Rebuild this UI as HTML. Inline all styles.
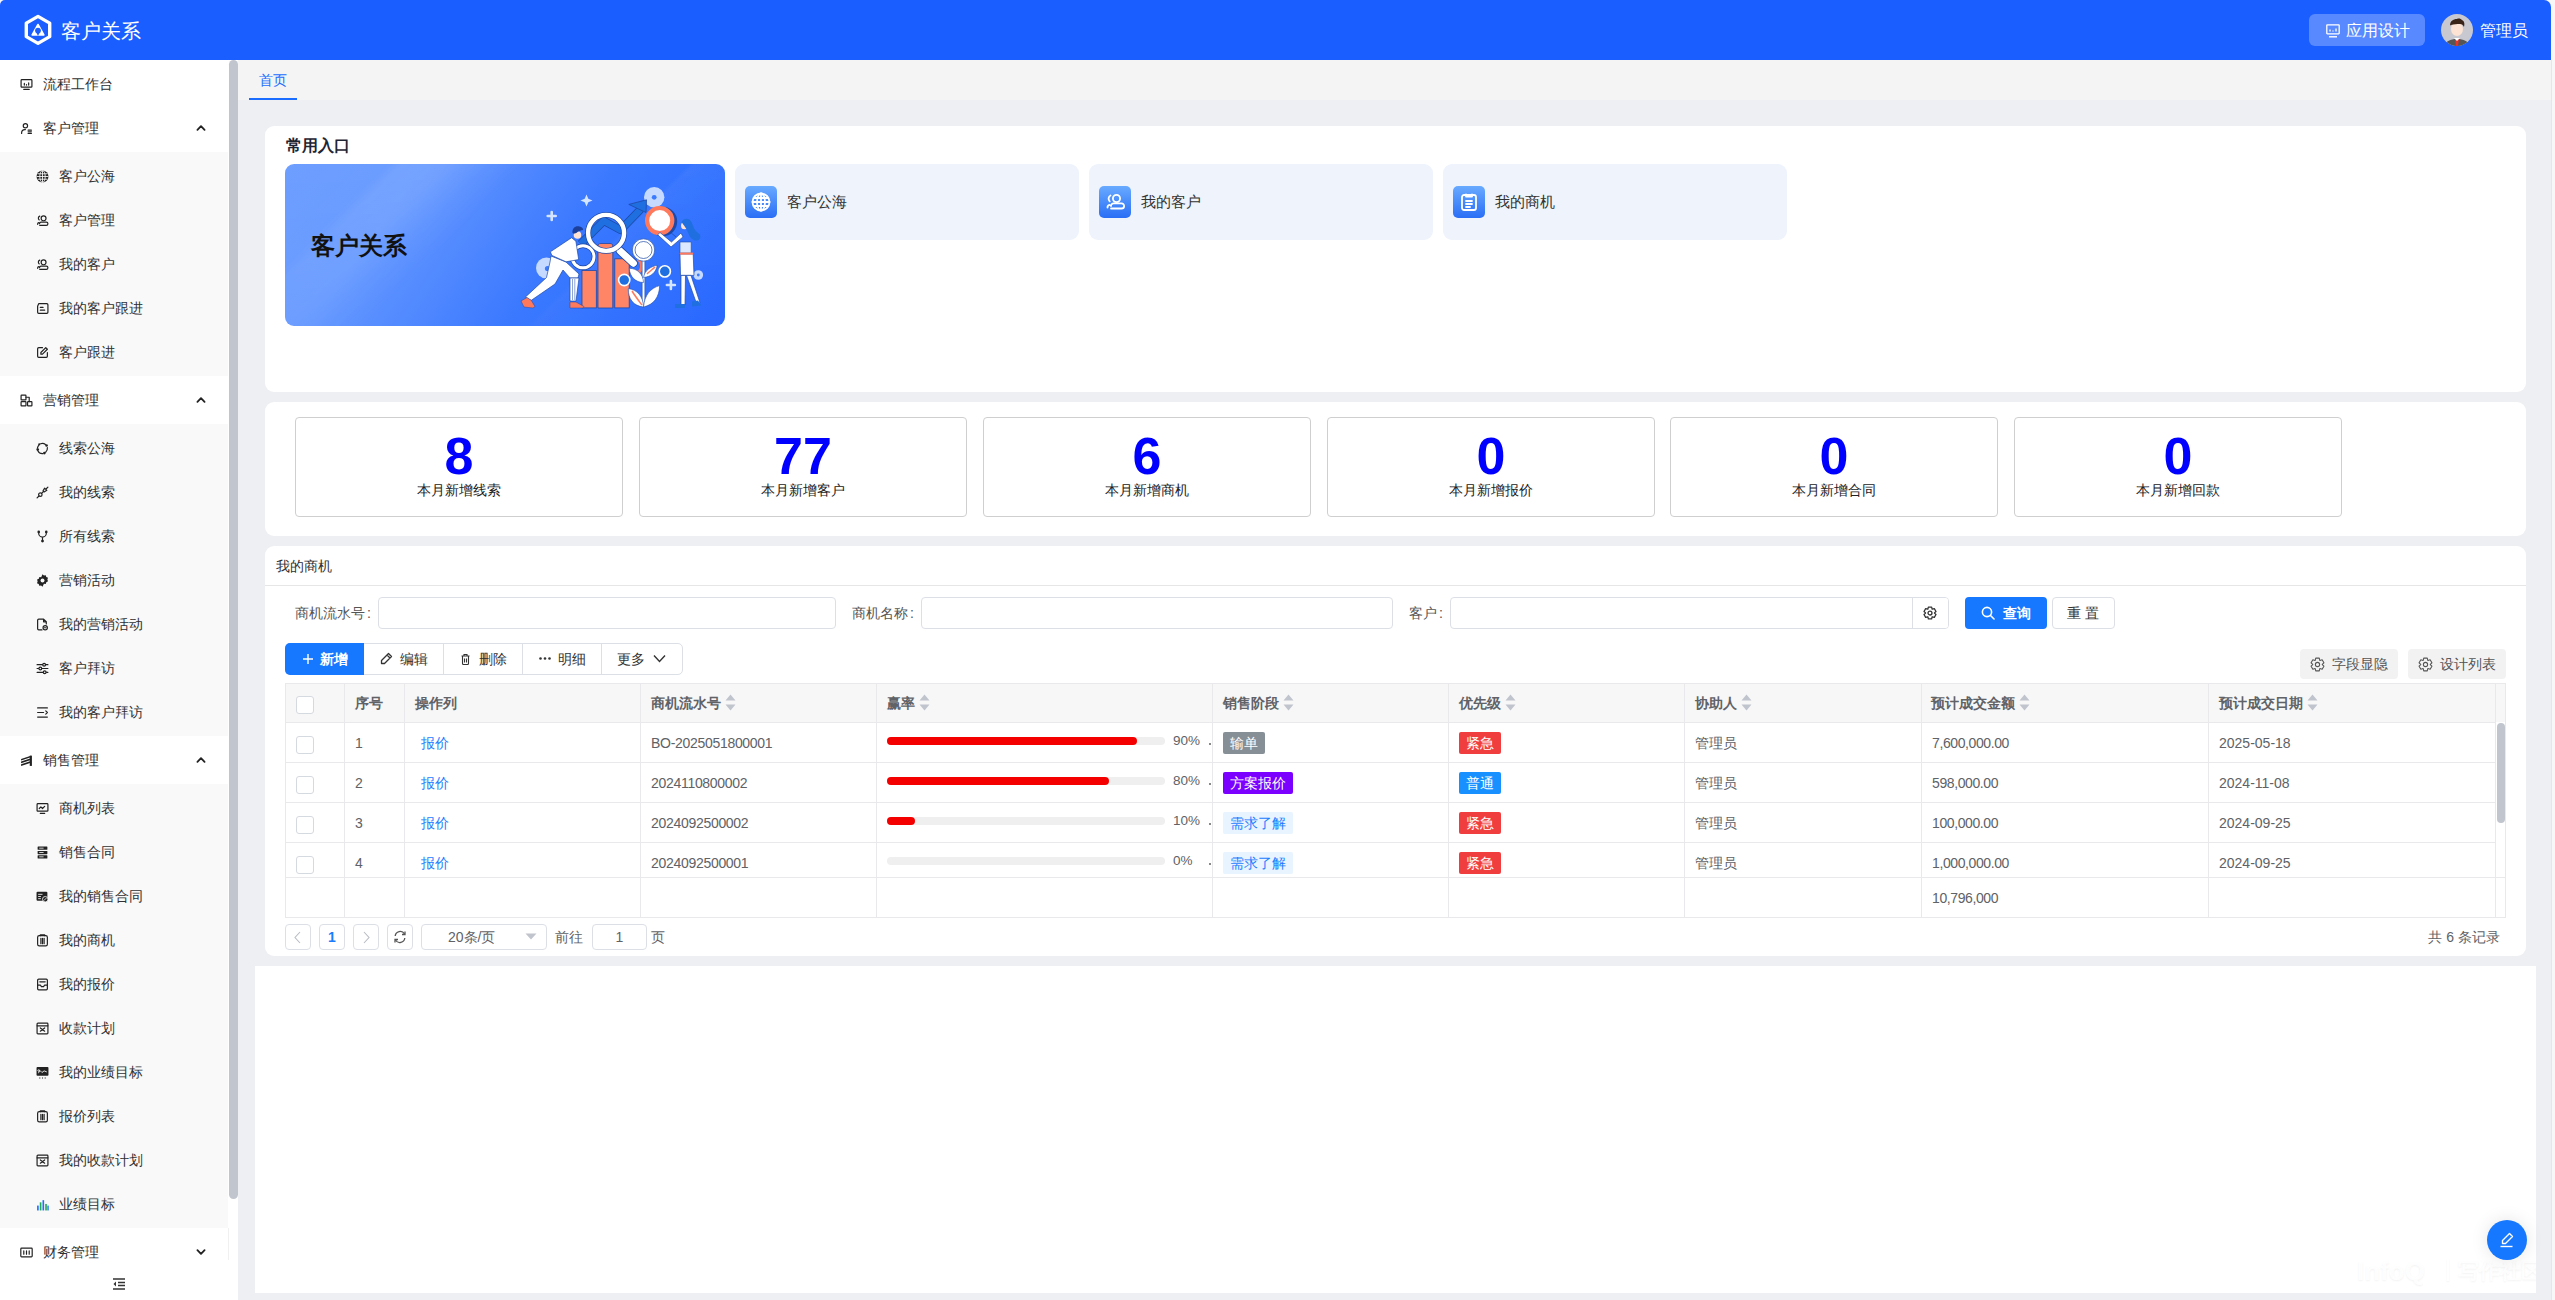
<!DOCTYPE html>
<html><head><meta charset="utf-8"><style>
*{box-sizing:border-box;margin:0;padding:0}
html,body{width:2555px;height:1300px;overflow:hidden;background:#f7f7f7;font-family:"Liberation Sans",sans-serif;font-size:14px;color:#303133}
.a{position:absolute}
svg{display:block}
#hdr{position:absolute;left:0;top:0;width:2551px;height:60px;background:#1b5eff;border-radius:5px 7px 0 0}
#side{position:absolute;left:0;top:60px;width:238px;height:1240px;background:#fff;overflow:hidden}
.mi{position:absolute;left:0;width:228px;height:44px;line-height:44px;font-size:14px;color:#303133;white-space:nowrap}
.mi svg{position:absolute;top:15.5px;left:19.5px}
.mi .t{position:absolute;left:43px;top:0}
.sm svg{left:35.5px}
.sm .t{left:59px}
.sub{position:absolute;left:0;width:228px;background:#f9f9f9}
.arr{position:absolute;left:196px;top:18px}
#thumb{position:absolute;left:229px;top:60px;width:9px;height:1139px;background:#c1c5cd;border-radius:5px}
#tabbar{position:absolute;left:238px;top:60px;width:2313px;height:40px;background:#f4f4f5}
#main{position:absolute;left:238px;top:100px;width:2313px;height:1200px;background:#eeeff3}
.card{position:absolute;background:#fff;border-radius:9px}
</style></head><body>
<div id="hdr"><svg class="a" style="left:22px;top:13px" width="32" height="34" viewBox="0 0 32 34"><path d="M16 3.4L27.7 10.15v13.5L16 30.4 4.3 23.65v-13.5z" fill="none" stroke="#fff" stroke-width="3.4" stroke-linejoin="round"/><path d="M16 11.5L21.8 22H10.2z" fill="#fff" stroke="#fff" stroke-width="1.6" stroke-linejoin="round"/><circle cx="16" cy="17.6" r="2.9" fill="#1b5eff"/><path d="M14.2 19.2L16 23l1.8-3.8z" fill="#1b5eff"/></svg><div class="a" style="left:61px;top:17px;font-size:20px;line-height:28px;color:#fff">客户关系</div><div class="a" style="left:2309px;top:14px;width:116px;height:32px;border-radius:6px;background:rgba(255,255,255,0.27)"></div><svg class="a" style="left:2326px;top:24px" width="14" height="14" viewBox="0 0 14 14"><rect x="0.8" y="0.8" width="12.4" height="9" rx="0.5" fill="none" stroke="#fff" stroke-width="1.3"/><path d="M3 12.8h8" stroke="#fff" stroke-width="1.4"/><path d="M4 7.5V5.5M7 7.5V6.5M10 7.5V4.5" stroke="#fff" stroke-width="1.3"/></svg><div class="a" style="left:2346px;top:20px;font-size:16px;line-height:22px;color:#fff">应用设计</div><svg class="a" style="left:2441px;top:14px" width="32" height="32" viewBox="0 0 32 32"><defs><clipPath id="av"><circle cx="16" cy="16" r="16"/></clipPath></defs><g clip-path="url(#av)"><rect width="32" height="32" fill="#c7c8d0"/><path d="M4 32c1-5 5-7 12-7s11 2 12 7z" fill="#555"/><path d="M14 25h4l-1 7h-2z" fill="#e8322a"/><path d="M13 24l3 3 3-3" fill="#fff"/><ellipse cx="16" cy="15" rx="6" ry="7" fill="#fde3d4"/><path d="M9 12c0-5 3-7 7-7 2-1 4 0 5 1 2 1 3 3 2 7-1-2-2-3-4-3-3 0-6 0-9 1-1 0-1 1-1 1z" fill="#3a2418"/></g></svg><div class="a" style="left:2480px;top:20px;font-size:16px;line-height:22px;color:#fff">管理员</div></div>
<div id="side"><div class="mi" style="top:2px"><svg width="13" height="13" viewBox="0 0 24 24" ><g fill="none" stroke="#222" stroke-width="2.2" stroke-linecap="round" stroke-linejoin="round"><rect x="2" y="3" width="20" height="14" rx="1.5"/><path d="M7 21h10M8 13v-3M12 13v-1M16 13v-4"/></g></svg><span class="t">流程工作台</span></div><div class="mi" style="top:46px"><svg width="13" height="13" viewBox="0 0 24 24" ><g fill="none" stroke="#222" stroke-width="2.2" stroke-linecap="round" stroke-linejoin="round"><circle cx="10" cy="7" r="4"/><path d="M3 21v-1a6 6 0 0 1 6-6h1M15 15h6M15 18h6M15 21h6"/></g></svg><span class="t">客户管理</span></div><svg class="a" style="left:196px;top:64px" width="10" height="8" viewBox="0 0 14 9"><path d="M2 7l5-5 5 5" fill="none" stroke="#222" stroke-width="2.6" stroke-linecap="round" stroke-linejoin="round"/></svg><div class="sub" style="top:92px;height:224px"></div><div class="mi sm" style="top:94px"><svg width="13" height="13" viewBox="0 0 24 24" ><circle cx="12" cy="12" r="11" fill="#222"/><g fill="none" stroke="#f9f9f9" stroke-width="1.6"><path d="M1 12h22M3 7h18M3 17h18M12 1v22"/><ellipse cx="12" cy="12" rx="5" ry="11"/></g></svg><span class="t">客户公海</span></div><div class="mi sm" style="top:138px"><svg width="13" height="13" viewBox="0 0 24 24" ><g fill="none" stroke="#222" stroke-width="2.2" stroke-linecap="round" stroke-linejoin="round"><circle cx="14" cy="8" r="4.5"/><path d="M7 21h12a3 3 0 0 0 0-6H9.5a3 3 0 0 0-3 3M7 4a4 4 0 0 0-1 7M3 19a3 3 0 0 1 2-3"/></g></svg><span class="t">客户管理</span></div><div class="mi sm" style="top:182px"><svg width="13" height="13" viewBox="0 0 24 24" ><g fill="none" stroke="#222" stroke-width="2.2" stroke-linecap="round" stroke-linejoin="round"><circle cx="14" cy="8" r="4.5"/><path d="M7 21h12a3 3 0 0 0 0-6H9.5a3 3 0 0 0-3 3M7 4a4 4 0 0 0-1 7M3 19a3 3 0 0 1 2-3"/></g></svg><span class="t">我的客户</span></div><div class="mi sm" style="top:226px"><svg width="13" height="13" viewBox="0 0 24 24" ><g fill="none" stroke="#222" stroke-width="2.2" stroke-linecap="round" stroke-linejoin="round"><path d="M5 3h15a2 2 0 0 1 2 2v14a2 2 0 0 1-2 2H5a2 2 0 0 1-2-2V8l2-5z"/><path d="M8 10h5M8 15h8"/></g></svg><span class="t">我的客户跟进</span></div><div class="mi sm" style="top:270px"><svg width="13" height="13" viewBox="0 0 24 24" ><g fill="none" stroke="#222" stroke-width="2.2" stroke-linecap="round" stroke-linejoin="round"><path d="M12 3H5a2 2 0 0 0-2 2v14a2 2 0 0 0 2 2h14a2 2 0 0 0 2-2v-7"/><path d="M18 3l3 3-9 9H9v-3z"/></g></svg><span class="t">客户跟进</span></div><div class="mi" style="top:318px"><svg width="13" height="13" viewBox="0 0 24 24" ><g fill="none" stroke="#222" stroke-width="2.2" stroke-linecap="round" stroke-linejoin="round"><rect x="2" y="2" width="9" height="9" rx="1"/><rect x="2" y="14" width="9" height="8" rx="1"/><rect x="14" y="14" width="8" height="8" rx="1"/><path d="M11 6h6v8"/></g></svg><span class="t">营销管理</span></div><svg class="a" style="left:196px;top:336px" width="10" height="8" viewBox="0 0 14 9"><path d="M2 7l5-5 5 5" fill="none" stroke="#222" stroke-width="2.6" stroke-linecap="round" stroke-linejoin="round"/></svg><div class="sub" style="top:364px;height:312px"></div><div class="mi sm" style="top:366px"><svg width="13" height="13" viewBox="0 0 24 24" ><g fill="none" stroke="#222" stroke-width="2.2" stroke-linecap="round" stroke-linejoin="round"><path d="M8.5 3.2A9.5 9.5 0 0 1 17.5 4.6M21 10.5a9.5 9.5 0 0 1-3.2 8.4M13 21.4a9.5 9.5 0 0 1-9.6-5.2M2.6 11.5a9.5 9.5 0 0 1 2-5"/></g><g fill="#222"><circle cx="19.5" cy="6.5" r="2.4"/><circle cx="15.5" cy="20.5" r="2.4"/><circle cx="3.2" cy="14" r="2.4"/><circle cx="6" cy="4.5" r="2"/></g></svg><span class="t">线索公海</span></div><div class="mi sm" style="top:410px"><svg width="13" height="13" viewBox="0 0 24 24" ><g fill="none" stroke="#222" stroke-width="2.2" stroke-linecap="round" stroke-linejoin="round"><path d="M2 22l3.5-3.5"/><circle cx="8" cy="16" r="3.2"/><path d="M10.5 13.5l3-3"/><path d="M13 9l3-5 4 4-5 3z"/><path d="M19 5l3-3"/></g></svg><span class="t">我的线索</span></div><div class="mi sm" style="top:454px"><svg width="13" height="13" viewBox="0 0 24 24" ><g fill="none" stroke="#222" stroke-width="2.2" stroke-linecap="round" stroke-linejoin="round"><path d="M5 3.5v2.5a7 7 0 0 0 7 7 7 7 0 0 0 7-7V3.5M12 13v6"/></g><g fill="#222"><circle cx="5" cy="3.5" r="2.4"/><circle cx="19" cy="3.5" r="2.4"/><circle cx="12" cy="20.5" r="2.6"/></g></svg><span class="t">所有线索</span></div><div class="mi sm" style="top:498px"><svg width="13" height="13" viewBox="0 0 24 24" ><path fill="#222" d="M12 0.5l2.6 2.3 3.4-.6 1 3.3 3.2 1.6-1.2 3.2 1.2 3.3-3.2 1.5-1 3.3-3.4-.6L12 23.5l-2.6-2.3-3.4.6-1-3.3-3.2-1.5 1.2-3.3L2 10.3l3.2-1.6 1-3.3 3.4.6z"/><circle cx="12" cy="12" r="3.6" fill="#f9f9f9"/></svg><span class="t">营销活动</span></div><div class="mi sm" style="top:542px"><svg width="13" height="13" viewBox="0 0 24 24" ><g fill="none" stroke="#222" stroke-width="2.2" stroke-linecap="round" stroke-linejoin="round"><path d="M14 2H5a2 2 0 0 0-2 2v16a2 2 0 0 0 2 2h6M14 2l5 5v4M14 2v5h5"/><circle cx="17" cy="18" r="4"/><path d="M15.5 18h3"/></g></svg><span class="t">我的营销活动</span></div><div class="mi sm" style="top:586px"><svg width="13" height="13" viewBox="0 0 24 24" ><g fill="none" stroke="#222" stroke-width="2.2" stroke-linecap="round" stroke-linejoin="round"><path d="M2 5h20M2 12h20M2 19h20"/></g><g fill="#f9f9f9" stroke="#222" stroke-width="2.2"><circle cx="15" cy="5" r="2.6"/><circle cx="8" cy="12" r="2.6"/><circle cx="16" cy="19" r="2.6"/></g></svg><span class="t">客户拜访</span></div><div class="mi sm" style="top:630px"><svg width="13" height="13" viewBox="0 0 24 24" ><g fill="none" stroke="#222" stroke-width="2.2" stroke-linecap="round" stroke-linejoin="round"><path d="M3 3.5h18M3 12h11M3 20.5h18M18 9l3 3-3 3"/></g></svg><span class="t">我的客户拜访</span></div><div class="mi" style="top:678px"><svg width="13" height="13" viewBox="0 0 24 24" ><g fill="#222"><path d="M2 9l18-6v3L2 12zM2 14l18-6v3L2 17zM2 19l18-6v3L2 22z"/><rect x="18" y="3" width="4" height="19"/></g></svg><span class="t">销售管理</span></div><svg class="a" style="left:196px;top:696px" width="10" height="8" viewBox="0 0 14 9"><path d="M2 7l5-5 5 5" fill="none" stroke="#222" stroke-width="2.6" stroke-linecap="round" stroke-linejoin="round"/></svg><div class="sub" style="top:724px;height:444px"></div><div class="mi sm" style="top:726px"><svg width="13" height="13" viewBox="0 0 24 24" ><g fill="none" stroke="#222" stroke-width="2.2" stroke-linecap="round" stroke-linejoin="round"><rect x="2" y="3" width="20" height="14" rx="1.5"/><path d="M8 21h8M6 12l3-3 3 3 4-4"/></g></svg><span class="t">商机列表</span></div><div class="mi sm" style="top:770px"><svg width="13" height="13" viewBox="0 0 24 24" ><g fill="#222"><rect x="3" y="1" width="18" height="6" rx="1"/><rect x="3" y="9" width="18" height="6" rx="1"/><rect x="3" y="17" width="18" height="6" rx="1"/></g><g stroke="#f9f9f9" stroke-width="1.5"><path d="M6 4h8M6 12h8M6 20h8"/></g></svg><span class="t">销售合同</span></div><div class="mi sm" style="top:814px"><svg width="13" height="13" viewBox="0 0 24 24" ><rect x="1" y="3" width="20" height="17" rx="2" fill="#222"/><path d="M4 8h8M4 12h5M4 16h5" stroke="#f9f9f9" stroke-width="1.6"/><circle cx="17" cy="17" r="5" fill="#222" stroke="#f9f9f9" stroke-width="1.5"/><path d="M14.5 19.5l5-5" stroke="#f9f9f9" stroke-width="1.5"/></svg><span class="t">我的销售合同</span></div><div class="mi sm" style="top:858px"><svg width="13" height="13" viewBox="0 0 24 24" ><g fill="none" stroke="#222" stroke-width="2.2" stroke-linecap="round" stroke-linejoin="round"><rect x="3" y="3" width="18" height="19" rx="3"/><path d="M8 3V1.5h8V3M9 8v10M12 8v10M15 8v10"/></g></svg><span class="t">我的商机</span></div><div class="mi sm" style="top:902px"><svg width="13" height="13" viewBox="0 0 24 24" ><g fill="none" stroke="#222" stroke-width="2.2" stroke-linecap="round" stroke-linejoin="round"><rect x="3" y="2" width="18" height="20" rx="2"/><path d="M7 7h10M3 13h5l2 3h4l2-3h5"/></g></svg><span class="t">我的报价</span></div><div class="mi sm" style="top:946px"><svg width="13" height="13" viewBox="0 0 24 24" ><g fill="none" stroke="#222" stroke-width="2.2" stroke-linecap="round" stroke-linejoin="round"><rect x="2" y="2" width="20" height="20" rx="1.5"/><path d="M2 7h20M8 11l8 6M16 11l-8 6"/></g></svg><span class="t">收款计划</span></div><div class="mi sm" style="top:990px"><svg width="13" height="13" viewBox="0 0 24 24" ><rect x="1" y="2" width="22" height="16" rx="1.5" fill="#222"/><path d="M4 13l4-4 3 3 4-3 5 2M5 7a1.5 1.5 0 1 0 0.1 0" stroke="#f9f9f9" stroke-width="1.6" fill="none"/><path d="M6 22h2M11 22h2M16 22h2" stroke="#222" stroke-width="2"/></svg><span class="t">我的业绩目标</span></div><div class="mi sm" style="top:1034px"><svg width="13" height="13" viewBox="0 0 24 24" ><g fill="none" stroke="#222" stroke-width="2.2" stroke-linecap="round" stroke-linejoin="round"><rect x="3" y="3" width="18" height="19" rx="3"/><path d="M8 3V1.5h8V3M9 8v10M12 8v10M15 8v10"/></g></svg><span class="t">报价列表</span></div><div class="mi sm" style="top:1078px"><svg width="13" height="13" viewBox="0 0 24 24" ><g fill="none" stroke="#222" stroke-width="2.2" stroke-linecap="round" stroke-linejoin="round"><rect x="2" y="2" width="20" height="20" rx="1.5"/><path d="M2 7h20M8 11l8 6M16 11l-8 6"/></g></svg><span class="t">我的收款计划</span></div><div class="mi sm" style="top:1122px"><svg width="13" height="13" viewBox="0 0 24 24" ><g><rect x="2" y="14" width="3" height="9" fill="#1a6fff"/><rect x="7" y="8" width="3" height="15" fill="#22aa55"/><rect x="12" y="4" width="3" height="19" fill="#1a6fff"/><rect x="17" y="11" width="3" height="12" fill="#22aa55"/><rect x="21" y="14" width="2.5" height="9" fill="#1a6fff"/></g></svg><span class="t">业绩目标</span></div><div class="mi" style="top:1170px"><svg width="13" height="13" viewBox="0 0 24 24" ><g fill="none" stroke="#222" stroke-width="2.2" stroke-linecap="round" stroke-linejoin="round"><rect x="1.5" y="4" width="21" height="16" rx="1.5"/><path d="M7 9v6M12 9v6M17 9v6"/></g></svg><span class="t">财务管理</span></div><svg class="a" style="left:196px;top:1188px" width="10" height="8" viewBox="0 0 14 9"><path d="M2 2l5 5 5-5" fill="none" stroke="#222" stroke-width="2.6" stroke-linecap="round" stroke-linejoin="round"/></svg><div class="a" style="left:228px;top:1168px;width:1px;height:32px;background:#f0f0f0"></div><div class="a" style="left:0;top:1200px;width:239px;height:40px;background:#fff"></div><svg class="a" style="left:112px;top:1218px" width="14" height="12" viewBox="0 0 14 12"><path d="M1 1h12M6 4.5h7M6 7.5h7M1 11h12" stroke="#333" stroke-width="1.4"/><path d="M4 3.5L1.5 6 4 8.5z" fill="#333"/></svg></div>
<div id="thumb"></div>
<div id="tabbar"></div><div class="a" style="left:259px;top:70px;font-size:14px;line-height:20px;color:#1a6dff">首页</div><div class="a" style="left:249px;top:98px;width:48px;height:2px;background:#1a6dff"></div><div id="main"></div><div class="a" style="left:2551px;top:60px;width:1px;height:1240px;background:#e6e6e6"></div><div class="card" style="left:265px;top:126px;width:2261px;height:266px"></div><div class="a" style="left:286px;top:135px;font-size:16px;line-height:22px;font-weight:bold;color:#1f2533">常用入口</div><div class="a" style="left:285px;top:164px;width:440px;height:162px;border-radius:9px;overflow:hidden;background:linear-gradient(125deg,#6a9cff 0%,#6397ff 25%,#5189ff 42%,#3b79ff 60%,#2f70ff 78%,#2766ff 100%)"><div class="a" style="left:0;top:0;width:440px;height:162px;background:linear-gradient(135deg,rgba(255,255,255,0.03) 0%,rgba(255,255,255,0.04) 17%,rgba(255,255,255,0.11) 19.5%,rgba(255,255,255,0.12) 27%,rgba(255,255,255,0.05) 33.6%,rgba(255,255,255,0) 40%,rgba(255,255,255,0) 67%,rgba(255,255,255,0.05) 68%,rgba(255,255,255,0.02) 100%);-webkit-mask-image:linear-gradient(180deg,#000 0%,rgba(0,0,0,0.5) 100%)"></div><div class="a" style="left:26px;top:66px;font-size:24px;line-height:32px;font-weight:bold;color:#111">客户关系</div></div><svg class="a" style="left:500px;top:170px" width="220" height="150" viewBox="0 0 220 150">
<g fill="#c6daff"><circle cx="154.2" cy="27.3" r="10.2"/><circle cx="46.5" cy="98" r="10.5"/><circle cx="198.3" cy="105" r="4.8"/></g>
<g fill="#3a7bff"><circle cx="154.2" cy="27.3" r="2.4"/><circle cx="47.5" cy="98.5" r="2.6"/><circle cx="198.3" cy="105" r="1.4"/></g>
<path d="M86.5 24.5l1.8 4.2 4.2 1.8-4.2 1.8-1.8 4.2-1.8-4.2-4.2-1.8 4.2-1.8z" fill="#d6e5ff"/>
<path d="M51.7 42v8M47.7 46h8M170.9 111v8M166.9 115h8" stroke="#d6e5ff" stroke-width="2.6" stroke-linecap="round"/>
<path d="M80.8 73.8L103.8 50.8 120.6 60 140.5 39.4" fill="none" stroke="#1d49a8" stroke-width="8.2" stroke-linejoin="round"/>
<path d="M80.8 73.8L103.8 50.8 120.6 60 140.5 39.4" fill="none" stroke="#1f6fe0" stroke-width="6.6" stroke-linejoin="round"/>
<path d="M128.8 34.4L146.5 29.8 146 42.5z" fill="#1f6fe0" stroke="#1d49a8" stroke-width="0.8" stroke-linejoin="round"/>
<g stroke="#1d49a8" stroke-width="0.8"><rect x="82" y="100.4" width="14.3" height="37.5" fill="#ff8566"/><path d="M98 76c0-2 1-2.5 3-2.5h9c1.5 0 2.8.5 2.8 2.5v62H98z" fill="#ff8566"/><rect x="114.8" y="88.8" width="14.4" height="49.1" fill="#ff8566"/></g>
<path d="M137.4 89a8 8 0 0 1 0 14" fill="none" stroke="#ff7a5c" stroke-width="3"/>
<path d="M120.2 81L133.4 93.2" stroke="#1d49a8" stroke-width="8.6" stroke-linecap="round"/>
<path d="M120.2 81L133.4 93.2" stroke="#fff" stroke-width="7" stroke-linecap="round"/>
<circle cx="106.1" cy="62.9" r="18" fill="none" stroke="#1d49a8" stroke-width="5.8"/>
<circle cx="106.1" cy="62.9" r="18" fill="none" stroke="#fff" stroke-width="4.4"/>
<circle cx="162.5" cy="51.5" r="14.7" fill="#1d49a8"/>
<circle cx="159.7" cy="50.6" r="12.6" fill="#fff" stroke="#ff7a5c" stroke-width="4.2"/>
<path d="M143.5 89v48" stroke="#fff" stroke-width="2.6"/><path d="M142.2 89v48M144.8 89v48" stroke="#1d49a8" stroke-width="0.5"/>
<circle cx="143.5" cy="80" r="11.2" fill="#fff" stroke="#1d49a8" stroke-width="0.7"/><circle cx="143.5" cy="80" r="8.5" fill="none" stroke="#1d49a8" stroke-width="0.7"/>
<g fill="#fff" stroke="#1d49a8" stroke-width="0.6">
<path d="M143.5 107.5c1-7 7-11 13.7-12.2-1 7-6 11.5-13.7 12.2z"/>
<path d="M129.3 98.3c8 0 14 6 14.2 14.2-8 0-14-6-14.2-14.2z"/>
<path d="M128.3 118.6c9 1 15 8 15.2 18.4-10-1-15.5-8-15.2-18.4z"/>
<path d="M143.5 137c1-12 7-19 16.2-21.4-.5 12-6 19-16.2 21.4z"/>
</g>
<path d="M147 104c3-3 6-5 8-7M132 121c3 5 7 10 10 14" stroke="#ff7a5c" stroke-width="1.5" fill="none"/>
<circle cx="164.8" cy="101.4" r="5.6" fill="#1f6fe0" stroke="#fff" stroke-width="1.6"/>
<circle cx="124.2" cy="110" r="5.6" fill="#1f6fe0" stroke="#fff" stroke-width="1.6"/>
<circle cx="83" cy="86.8" r="11" fill="none" stroke="#1d49a8" stroke-width="4.4"/>
<circle cx="83" cy="86.8" r="11" fill="none" stroke="#fff" stroke-width="3"/>
<g fill="#fff" stroke="#1d49a8" stroke-width="0.7" stroke-linejoin="round">
<path d="M51 86L66 92L79 104L78 108L70 108L63 100L55 114L31 130.5L25.5 127L46.5 107.5L50 92z"/>
<path d="M70 108L79 108L76 131L70 131z"/>
<path d="M50.4 81.8L71.6 67.7L75.9 71.2L78.7 89.6L66 91.8L51.8 85.4z"/>
<path d="M171 62.8L176 66.9" stroke-width="0.7"/>
<path d="M183 66.9L171 77L157.7 64.8L160 62.5L171.5 72L181 63z"/>
<path d="M180 84L193.2 84L194 105.4L180.5 105.4z"/>
<path d="M181 105.4L185.5 105.4L185 135L181 135z"/>
<path d="M186.5 105.4L191 105.4L200 132.8L196.5 133.5z"/>
</g>
<path d="M180 72h11.2v11h-11.2z" fill="#dce8ff" stroke="#1d49a8" stroke-width="0.6"/>
<path d="M180 82.6h13.2v2h-13.2z" fill="#ff7a5c"/>
<path d="M72.5 109v21M74.8 109v21" stroke="#1d49a8" stroke-width="0.5"/>
<g fill="#ff7a5c" stroke="#1d49a8" stroke-width="0.5"><path d="M21 131L27 127.5L31 130L35 136.5L33 138L24 137z"/><path d="M70 132L76 132L84 136.5L83 138L70 138z"/></g>
<g fill="#1f6fe0"><path d="M175 134h10v4h-10z"/><path d="M192 131.5l6-1 3.4 5-9.4 1z"/></g>
<circle cx="77.5" cy="65" r="3.8" fill="#ffe2d2"/><path d="M72.5 63c-.5-5 3-7.5 7-6.5 2.5.6 4 2 3.5 3.5-2 .5-4 .5-5.5 2-1.5 1.5-3.5 2-5 1z" fill="#1b3f9a"/>
<circle cx="184.6" cy="55.7" r="3.6" fill="#ffe2d2"/><path d="M181.5 52c2-4.5 8-4.5 10 0 2 5 3 9 8 12 2 3 .5 7-4 6.5-4-.5-6-4-7.5-8-1-3-2.5-5-6.5-10.5z" fill="#1f6fe0"/>
</svg><div class="a" style="left:735px;top:164px;width:344px;height:76px;border-radius:9px;background:#eef3fc"></div><div class="a" style="left:745px;top:186px;width:32px;height:32px;border-radius:5px;background:linear-gradient(180deg,#68aaff,#2a6ef6)"></div><div class="a" style="left:750px;top:191px"><svg width="22" height="22" viewBox="0 0 22 22"><g stroke="#fff" fill="none" stroke-width="1.8" stroke-linecap="round" stroke-linejoin="round"><circle cx="11" cy="11" r="8.5"/><path d="M2.5 11h17M4 7h14M4 15h14M11 2.5v17"/><ellipse cx="11" cy="11" rx="4" ry="8.5"/></g></svg></div><div class="a" style="left:787px;top:191px;font-size:15px;line-height:22px;color:#333">客户公海</div><div class="a" style="left:1089px;top:164px;width:344px;height:76px;border-radius:9px;background:#eef3fc"></div><div class="a" style="left:1099px;top:186px;width:32px;height:32px;border-radius:5px;background:linear-gradient(180deg,#68aaff,#2a6ef6)"></div><div class="a" style="left:1104px;top:191px"><svg width="22" height="22" viewBox="0 0 22 22"><g stroke="#fff" fill="none" stroke-width="1.8" stroke-linecap="round" stroke-linejoin="round"><circle cx="12.5" cy="7.5" r="3.6"/><path d="M7 17.5h10.5a2.6 2.6 0 0 0 0-5.2H9.6A2.6 2.6 0 0 0 7 15M6.5 4.5a3.6 3.6 0 0 0-.8 5.8M3.5 16.5a2.6 2.6 0 0 1 2-2.6"/></g></svg></div><div class="a" style="left:1141px;top:191px;font-size:15px;line-height:22px;color:#333">我的客户</div><div class="a" style="left:1443px;top:164px;width:344px;height:76px;border-radius:9px;background:#eef3fc"></div><div class="a" style="left:1453px;top:186px;width:32px;height:32px;border-radius:5px;background:linear-gradient(180deg,#68aaff,#2a6ef6)"></div><div class="a" style="left:1458px;top:191px"><svg width="22" height="22" viewBox="0 0 22 22"><g stroke="#fff" fill="none" stroke-width="1.8" stroke-linecap="round" stroke-linejoin="round"><rect x="4" y="4" width="14" height="15" rx="2"/><path d="M8 3.5v2h6v-2M8 10h6M8 13h6M8 16h4"/></g></svg></div><div class="a" style="left:1495px;top:191px;font-size:15px;line-height:22px;color:#333">我的商机</div><div class="card" style="left:265px;top:402px;width:2261px;height:134px"></div><div class="a" style="left:295px;top:417px;width:328px;height:100px;border:1px solid #cfcfcf;border-radius:4px"></div><div class="a" style="left:295px;top:426px;width:328px;text-align:center;font-size:52px;line-height:60px;font-weight:bold;color:#0000ff">8</div><div class="a" style="left:295px;top:480px;width:328px;text-align:center;font-size:14px;line-height:20px;color:#222">本月新增线索</div><div class="a" style="left:639px;top:417px;width:328px;height:100px;border:1px solid #cfcfcf;border-radius:4px"></div><div class="a" style="left:639px;top:426px;width:328px;text-align:center;font-size:52px;line-height:60px;font-weight:bold;color:#0000ff">77</div><div class="a" style="left:639px;top:480px;width:328px;text-align:center;font-size:14px;line-height:20px;color:#222">本月新增客户</div><div class="a" style="left:983px;top:417px;width:328px;height:100px;border:1px solid #cfcfcf;border-radius:4px"></div><div class="a" style="left:983px;top:426px;width:328px;text-align:center;font-size:52px;line-height:60px;font-weight:bold;color:#0000ff">6</div><div class="a" style="left:983px;top:480px;width:328px;text-align:center;font-size:14px;line-height:20px;color:#222">本月新增商机</div><div class="a" style="left:1327px;top:417px;width:328px;height:100px;border:1px solid #cfcfcf;border-radius:4px"></div><div class="a" style="left:1327px;top:426px;width:328px;text-align:center;font-size:52px;line-height:60px;font-weight:bold;color:#0000ff">0</div><div class="a" style="left:1327px;top:480px;width:328px;text-align:center;font-size:14px;line-height:20px;color:#222">本月新增报价</div><div class="a" style="left:1670px;top:417px;width:328px;height:100px;border:1px solid #cfcfcf;border-radius:4px"></div><div class="a" style="left:1670px;top:426px;width:328px;text-align:center;font-size:52px;line-height:60px;font-weight:bold;color:#0000ff">0</div><div class="a" style="left:1670px;top:480px;width:328px;text-align:center;font-size:14px;line-height:20px;color:#222">本月新增合同</div><div class="a" style="left:2014px;top:417px;width:328px;height:100px;border:1px solid #cfcfcf;border-radius:4px"></div><div class="a" style="left:2014px;top:426px;width:328px;text-align:center;font-size:52px;line-height:60px;font-weight:bold;color:#0000ff">0</div><div class="a" style="left:2014px;top:480px;width:328px;text-align:center;font-size:14px;line-height:20px;color:#222">本月新增回款</div><div class="card" style="left:265px;top:546px;width:2261px;height:410px"></div><div class="a" style="left:276px;top:556px;font-size:14px;line-height:20px;color:#303133">我的商机</div><div class="a" style="left:265px;top:585px;width:2261px;height:1px;background:#e6e6e6"></div><div class="a" style="left:295px;top:603px;font-size:14px;line-height:20px;color:#555">商机流水号<span style="margin-left:2px">:</span></div><div class="a" style="left:378px;top:597px;width:458px;height:32px;border:1px solid #dcdfe6;border-radius:4px"></div><div class="a" style="left:852px;top:603px;font-size:14px;line-height:20px;color:#555">商机名称<span style="margin-left:2px">:</span></div><div class="a" style="left:921px;top:597px;width:472px;height:32px;border:1px solid #dcdfe6;border-radius:4px"></div><div class="a" style="left:1409px;top:603px;font-size:14px;line-height:20px;color:#555">客户<span style="margin-left:2px">:</span></div><div class="a" style="left:1450px;top:597px;width:499px;height:32px;border:1px solid #dcdfe6;border-radius:4px"></div><div class="a" style="left:1912px;top:598px;width:36px;height:30px;border-left:1px solid #dcdfe6;background:#fff;border-radius:0 3px 3px 0"></div><div class="a" style="left:1923px;top:606px"><svg width="14" height="14" viewBox="0 0 24 24"><path d="M8.36 5.33 L9.17 1.78 L14.83 1.78 L15.64 5.33 L15.95 5.51 L19.43 4.44 L22.26 9.34 L19.60 11.82 L19.60 12.18 L22.26 14.66 L19.43 19.56 L15.95 18.49 L15.64 18.67 L14.83 22.22 L9.17 22.22 L8.36 18.67 L8.05 18.49 L4.57 19.56 L1.74 14.66 L4.40 12.18 L4.40 11.82 L1.74 9.34 L4.57 4.44 L8.05 5.51z" fill="none" stroke="#333" stroke-width="2.2" stroke-linejoin="round"/><circle cx="12" cy="12" r="3.4" fill="none" stroke="#333" stroke-width="2.2"/></svg></div><div class="a" style="left:1965px;top:597px;width:82px;height:32px;border-radius:4px;background:#1677ff"></div><svg class="a" style="left:1981px;top:606px" width="14" height="14" viewBox="0 0 14 14"><circle cx="6" cy="6" r="4.6" fill="none" stroke="#fff" stroke-width="1.6"/><path d="M9.5 9.5L13 13" stroke="#fff" stroke-width="1.6" stroke-linecap="round"/></svg><div class="a" style="left:2003px;top:603px;font-size:14px;line-height:20px;color:#fff;font-weight:600">查询</div><div class="a" style="left:2052px;top:597px;width:63px;height:32px;border:1px solid #dcdfe6;border-radius:4px"></div><div class="a" style="left:2067px;top:603px;font-size:14px;line-height:20px;color:#333;letter-spacing:4px">重置</div><div class="a" style="left:285px;top:643px;width:398px;height:32px;border:1px solid #dcdfe6;border-radius:5px"></div><div class="a" style="left:285px;top:643px;width:79px;height:32px;background:#1677ff;border-radius:5px 0 0 5px"></div><div class="a" style="left:443px;top:643px;width:1px;height:32px;background:#dcdfe6"></div><div class="a" style="left:522px;top:643px;width:1px;height:32px;background:#dcdfe6"></div><div class="a" style="left:601px;top:643px;width:1px;height:32px;background:#dcdfe6"></div><svg class="a" style="left:302px;top:653px" width="12" height="12" viewBox="0 0 12 12"><path d="M6 1v10M1 6h10" stroke="#fff" stroke-width="1.4"/></svg><div class="a" style="left:320px;top:649px;font-size:14px;line-height:20px;color:#fff;font-weight:bold">新增</div><svg class="a" style="left:380px;top:652px" width="13" height="13" viewBox="0 0 13 13"><path d="M8.5 1.5l3 3-7 7H1.5v-3z M7 3l3 3" fill="none" stroke="#333" stroke-width="1.3" stroke-linejoin="round"/></svg><div class="a" style="left:400px;top:649px;font-size:14px;line-height:20px;color:#333">编辑</div><svg class="a" style="left:460px;top:653px" width="11" height="12" viewBox="0 0 11 12"><path d="M1.5 3h8M4 3V1.5h3V3M2.5 3v7.5a1 1 0 0 0 1 1h4a1 1 0 0 0 1-1V3M4.5 5.5v4M6.5 5.5v4" fill="none" stroke="#333" stroke-width="1.1"/></svg><div class="a" style="left:479px;top:649px;font-size:14px;line-height:20px;color:#333">删除</div><svg class="a" style="left:539px;top:657px" width="12" height="3" viewBox="0 0 12 3"><circle cx="1.5" cy="1.5" r="1.3" fill="#333"/><circle cx="6" cy="1.5" r="1.3" fill="#333"/><circle cx="10.5" cy="1.5" r="1.3" fill="#333"/></svg><div class="a" style="left:558px;top:649px;font-size:14px;line-height:20px;color:#333">明细</div><div class="a" style="left:617px;top:649px;font-size:14px;line-height:20px;color:#333">更多</div><svg class="a" style="left:653px;top:654px" width="13" height="9" viewBox="0 0 13 9"><path d="M1 1.5l5.5 6 5.5-6" fill="none" stroke="#333" stroke-width="1.4"/></svg><div class="a" style="left:2300px;top:649px;width:98px;height:30px;border-radius:4px;background:#f2f2f3"></div><div class="a" style="left:2309.5px;top:656.5px"><svg width="15" height="15" viewBox="0 0 24 24"><path d="M8.36 5.33 L9.17 1.78 L14.83 1.78 L15.64 5.33 L15.95 5.51 L19.43 4.44 L22.26 9.34 L19.60 11.82 L19.60 12.18 L22.26 14.66 L19.43 19.56 L15.95 18.49 L15.64 18.67 L14.83 22.22 L9.17 22.22 L8.36 18.67 L8.05 18.49 L4.57 19.56 L1.74 14.66 L4.40 12.18 L4.40 11.82 L1.74 9.34 L4.57 4.44 L8.05 5.51z" fill="none" stroke="#555" stroke-width="1.7" stroke-linejoin="round"/><circle cx="12" cy="12" r="3.4" fill="none" stroke="#555" stroke-width="1.7"/></svg></div><div class="a" style="left:2332px;top:654px;font-size:14px;line-height:20px;color:#555">字段显隐</div><div class="a" style="left:2408px;top:649px;width:98px;height:30px;border-radius:4px;background:#f2f2f3"></div><div class="a" style="left:2417.5px;top:656.5px"><svg width="15" height="15" viewBox="0 0 24 24"><path d="M8.36 5.33 L9.17 1.78 L14.83 1.78 L15.64 5.33 L15.95 5.51 L19.43 4.44 L22.26 9.34 L19.60 11.82 L19.60 12.18 L22.26 14.66 L19.43 19.56 L15.95 18.49 L15.64 18.67 L14.83 22.22 L9.17 22.22 L8.36 18.67 L8.05 18.49 L4.57 19.56 L1.74 14.66 L4.40 12.18 L4.40 11.82 L1.74 9.34 L4.57 4.44 L8.05 5.51z" fill="none" stroke="#555" stroke-width="1.7" stroke-linejoin="round"/><circle cx="12" cy="12" r="3.4" fill="none" stroke="#555" stroke-width="1.7"/></svg></div><div class="a" style="left:2440px;top:654px;font-size:14px;line-height:20px;color:#555">设计列表</div><div class="a" style="left:285px;top:683px;width:2221px;height:235.0px;border:1px solid #e9e9eb"></div><div class="a" style="left:286px;top:684px;width:2219px;height:38px;background:#f7f7f8"></div><div class="a" style="left:286px;top:721.5px;width:2210px;height:1px;background:#e9e9eb"></div><div class="a" style="left:286px;top:762.0px;width:2210px;height:1px;background:#e9e9eb"></div><div class="a" style="left:286px;top:802.0px;width:2210px;height:1px;background:#e9e9eb"></div><div class="a" style="left:286px;top:842.0px;width:2210px;height:1px;background:#e9e9eb"></div><div class="a" style="left:286px;top:877.0px;width:2220px;height:1px;background:#e9e9eb"></div><div class="a" style="left:344.0px;top:683px;width:1px;height:234.5px;background:#e9e9eb"></div><div class="a" style="left:404.0px;top:683px;width:1px;height:234.5px;background:#e9e9eb"></div><div class="a" style="left:640.0px;top:683px;width:1px;height:234.5px;background:#e9e9eb"></div><div class="a" style="left:876.0px;top:683px;width:1px;height:234.5px;background:#e9e9eb"></div><div class="a" style="left:1212.0px;top:683px;width:1px;height:234.5px;background:#e9e9eb"></div><div class="a" style="left:1448.0px;top:683px;width:1px;height:234.5px;background:#e9e9eb"></div><div class="a" style="left:1684.0px;top:683px;width:1px;height:234.5px;background:#e9e9eb"></div><div class="a" style="left:1920.5px;top:683px;width:1px;height:234.5px;background:#e9e9eb"></div><div class="a" style="left:2208.0px;top:683px;width:1px;height:234.5px;background:#e9e9eb"></div><div class="a" style="left:2495.0px;top:683px;width:1px;height:234.5px;background:#e9e9eb"></div><div class="a" style="left:2497px;top:723px;width:8px;height:100px;border-radius:4px;background:#c1c5cd"></div><div class="a" style="left:295.5px;top:695.5px;width:18px;height:18px;border:1.5px solid #d5d9e0;border-radius:3px;background:#fff"></div><div class="a" style="left:354.5px;top:693px;font-size:14px;line-height:20px;font-weight:bold;color:#606266;white-space:nowrap">序号</div><div class="a" style="left:414.5px;top:693px;font-size:14px;line-height:20px;font-weight:bold;color:#606266;white-space:nowrap">操作列</div><div class="a" style="left:650.5px;top:693px;font-size:14px;line-height:20px;font-weight:bold;color:#606266;white-space:nowrap">商机流水号</div><svg class="a" style="left:724.5px;top:694px" width="11" height="17" viewBox="0 0 11 17"><path d="M5.5 0.5L10.5 6.5H0.5z M5.5 16.5L10.5 10.5H0.5z" fill="#c0c4cc"/></svg><div class="a" style="left:886.5px;top:693px;font-size:14px;line-height:20px;font-weight:bold;color:#606266;white-space:nowrap">赢率</div><svg class="a" style="left:918.5px;top:694px" width="11" height="17" viewBox="0 0 11 17"><path d="M5.5 0.5L10.5 6.5H0.5z M5.5 16.5L10.5 10.5H0.5z" fill="#c0c4cc"/></svg><div class="a" style="left:1222.5px;top:693px;font-size:14px;line-height:20px;font-weight:bold;color:#606266;white-space:nowrap">销售阶段</div><svg class="a" style="left:1282.5px;top:694px" width="11" height="17" viewBox="0 0 11 17"><path d="M5.5 0.5L10.5 6.5H0.5z M5.5 16.5L10.5 10.5H0.5z" fill="#c0c4cc"/></svg><div class="a" style="left:1458.5px;top:693px;font-size:14px;line-height:20px;font-weight:bold;color:#606266;white-space:nowrap">优先级</div><svg class="a" style="left:1504.5px;top:694px" width="11" height="17" viewBox="0 0 11 17"><path d="M5.5 0.5L10.5 6.5H0.5z M5.5 16.5L10.5 10.5H0.5z" fill="#c0c4cc"/></svg><div class="a" style="left:1694.5px;top:693px;font-size:14px;line-height:20px;font-weight:bold;color:#606266;white-space:nowrap">协助人</div><svg class="a" style="left:1740.5px;top:694px" width="11" height="17" viewBox="0 0 11 17"><path d="M5.5 0.5L10.5 6.5H0.5z M5.5 16.5L10.5 10.5H0.5z" fill="#c0c4cc"/></svg><div class="a" style="left:1931px;top:693px;font-size:14px;line-height:20px;font-weight:bold;color:#606266;white-space:nowrap">预计成交金额</div><svg class="a" style="left:2019px;top:694px" width="11" height="17" viewBox="0 0 11 17"><path d="M5.5 0.5L10.5 6.5H0.5z M5.5 16.5L10.5 10.5H0.5z" fill="#c0c4cc"/></svg><div class="a" style="left:2218.5px;top:693px;font-size:14px;line-height:20px;font-weight:bold;color:#606266;white-space:nowrap">预计成交日期</div><svg class="a" style="left:2306.5px;top:694px" width="11" height="17" viewBox="0 0 11 17"><path d="M5.5 0.5L10.5 6.5H0.5z M5.5 16.5L10.5 10.5H0.5z" fill="#c0c4cc"/></svg><div class="a" style="left:295.5px;top:735.5px;width:18px;height:18px;border:1.5px solid #d5d9e0;border-radius:3px;background:#fff"></div><div class="a" style="left:355px;top:732.5px;font-size:14px;line-height:20px;color:#606266">1</div><div class="a" style="left:421px;top:732.5px;font-size:14px;line-height:20px;color:#1a7cff">报价</div><div class="a" style="left:651px;top:732.5px;font-size:14px;letter-spacing:-0.3px;line-height:20px;color:#606266">BO-2025051800001</div><div class="a" style="left:887px;top:737px;width:278px;height:8px;border-radius:4px;background:#efefef"></div><div class="a" style="left:887px;top:737px;width:250px;height:8px;border-radius:4px;background:#f50000"></div><div class="a" style="left:1173px;top:731px;font-size:13.5px;line-height:20px;color:#606266">90%</div><div class="a" style="left:1209px;top:743px;width:2px;height:2px;background:#888"></div><div class="a" style="left:1223px;top:732px;width:42px;height:22px;border-radius:2px;background:#868e96;color:#fff;font-size:14px;line-height:22px;text-align:center">输单</div><div class="a" style="left:1459px;top:732px;width:42px;height:22px;border-radius:2px;background:#f03e3e;color:#fff;font-size:14px;line-height:22px;text-align:center">紧急</div><div class="a" style="left:1695px;top:732.5px;font-size:14px;line-height:20px;color:#606266">管理员</div><div class="a" style="left:1932px;top:732.5px;font-size:14px;letter-spacing:-0.4px;line-height:20px;color:#606266">7,600,000.00</div><div class="a" style="left:2219px;top:732.5px;font-size:14px;line-height:20px;color:#606266">2025-05-18</div><div class="a" style="left:295.5px;top:775.5px;width:18px;height:18px;border:1.5px solid #d5d9e0;border-radius:3px;background:#fff"></div><div class="a" style="left:355px;top:772.5px;font-size:14px;line-height:20px;color:#606266">2</div><div class="a" style="left:421px;top:772.5px;font-size:14px;line-height:20px;color:#1a7cff">报价</div><div class="a" style="left:651px;top:772.5px;font-size:14px;letter-spacing:-0.3px;line-height:20px;color:#606266">2024110800002</div><div class="a" style="left:887px;top:777px;width:278px;height:8px;border-radius:4px;background:#efefef"></div><div class="a" style="left:887px;top:777px;width:222px;height:8px;border-radius:4px;background:#f50000"></div><div class="a" style="left:1173px;top:771px;font-size:13.5px;line-height:20px;color:#606266">80%</div><div class="a" style="left:1209px;top:783px;width:2px;height:2px;background:#888"></div><div class="a" style="left:1223px;top:772px;width:70px;height:22px;border-radius:2px;background:#7b00ff;color:#fff;font-size:14px;line-height:22px;text-align:center">方案报价</div><div class="a" style="left:1459px;top:772px;width:42px;height:22px;border-radius:2px;background:#1890ff;color:#fff;font-size:14px;line-height:22px;text-align:center">普通</div><div class="a" style="left:1695px;top:772.5px;font-size:14px;line-height:20px;color:#606266">管理员</div><div class="a" style="left:1932px;top:772.5px;font-size:14px;letter-spacing:-0.4px;line-height:20px;color:#606266">598,000.00</div><div class="a" style="left:2219px;top:772.5px;font-size:14px;line-height:20px;color:#606266">2024-11-08</div><div class="a" style="left:295.5px;top:815.5px;width:18px;height:18px;border:1.5px solid #d5d9e0;border-radius:3px;background:#fff"></div><div class="a" style="left:355px;top:812.5px;font-size:14px;line-height:20px;color:#606266">3</div><div class="a" style="left:421px;top:812.5px;font-size:14px;line-height:20px;color:#1a7cff">报价</div><div class="a" style="left:651px;top:812.5px;font-size:14px;letter-spacing:-0.3px;line-height:20px;color:#606266">2024092500002</div><div class="a" style="left:887px;top:817px;width:278px;height:8px;border-radius:4px;background:#efefef"></div><div class="a" style="left:887px;top:817px;width:28px;height:8px;border-radius:4px;background:#f50000"></div><div class="a" style="left:1173px;top:811px;font-size:13.5px;line-height:20px;color:#606266">10%</div><div class="a" style="left:1209px;top:823px;width:2px;height:2px;background:#888"></div><div class="a" style="left:1223px;top:812px;width:70px;height:22px;border-radius:2px;background:#e8f4ff;color:#1a7cff;font-size:14px;line-height:22px;text-align:center">需求了解</div><div class="a" style="left:1459px;top:812px;width:42px;height:22px;border-radius:2px;background:#f03e3e;color:#fff;font-size:14px;line-height:22px;text-align:center">紧急</div><div class="a" style="left:1695px;top:812.5px;font-size:14px;line-height:20px;color:#606266">管理员</div><div class="a" style="left:1932px;top:812.5px;font-size:14px;letter-spacing:-0.4px;line-height:20px;color:#606266">100,000.00</div><div class="a" style="left:2219px;top:812.5px;font-size:14px;line-height:20px;color:#606266">2024-09-25</div><div class="a" style="left:295.5px;top:855.5px;width:18px;height:18px;border:1.5px solid #d5d9e0;border-radius:3px;background:#fff"></div><div class="a" style="left:355px;top:852.5px;font-size:14px;line-height:20px;color:#606266">4</div><div class="a" style="left:421px;top:852.5px;font-size:14px;line-height:20px;color:#1a7cff">报价</div><div class="a" style="left:651px;top:852.5px;font-size:14px;letter-spacing:-0.3px;line-height:20px;color:#606266">2024092500001</div><div class="a" style="left:887px;top:857px;width:278px;height:8px;border-radius:4px;background:#efefef"></div><div class="a" style="left:1173px;top:851px;font-size:13.5px;line-height:20px;color:#606266">0%</div><div class="a" style="left:1209px;top:863px;width:2px;height:2px;background:#888"></div><div class="a" style="left:1223px;top:852px;width:70px;height:22px;border-radius:2px;background:#e8f4ff;color:#1a7cff;font-size:14px;line-height:22px;text-align:center">需求了解</div><div class="a" style="left:1459px;top:852px;width:42px;height:22px;border-radius:2px;background:#f03e3e;color:#fff;font-size:14px;line-height:22px;text-align:center">紧急</div><div class="a" style="left:1695px;top:852.5px;font-size:14px;line-height:20px;color:#606266">管理员</div><div class="a" style="left:1932px;top:852.5px;font-size:14px;letter-spacing:-0.4px;line-height:20px;color:#606266">1,000,000.00</div><div class="a" style="left:2219px;top:852.5px;font-size:14px;line-height:20px;color:#606266">2024-09-25</div><div class="a" style="left:1932px;top:888px;font-size:14px;letter-spacing:-0.4px;line-height:20px;color:#606266">10,796,000</div><div class="a" style="left:285px;top:924px;width:26px;height:26px;border:1px solid #dcdfe6;border-radius:4px"></div><div class="a" style="left:319px;top:924px;width:26px;height:26px;border:1px solid #dcdfe6;border-radius:4px"></div><div class="a" style="left:353px;top:924px;width:26px;height:26px;border:1px solid #dcdfe6;border-radius:4px"></div><div class="a" style="left:387px;top:924px;width:26px;height:26px;border:1px solid #dcdfe6;border-radius:4px"></div><svg class="a" style="left:293px;top:931px" width="9" height="13" viewBox="0 0 9 13"><path d="M7 1L2 6.5 7 12" fill="none" stroke="#b8bcc4" stroke-width="1.1"/></svg><div class="a" style="left:319px;top:927px;width:26px;text-align:center;font-size:14px;line-height:20px;color:#1a7cff;font-weight:bold">1</div><svg class="a" style="left:362px;top:931px" width="9" height="13" viewBox="0 0 9 13"><path d="M2 1l5 5.5L2 12" fill="none" stroke="#b8bcc4" stroke-width="1.1"/></svg><svg class="a" style="left:393px;top:930px" width="14" height="14" viewBox="0 0 14 14"><path d="M2.2 6A5 5 0 0 1 11.5 4M11.8 8A5 5 0 0 1 2.5 10" fill="none" stroke="#555" stroke-width="1.3"/><path d="M12 1.5v3h-3M2 12.5v-3h3" fill="none" stroke="#555" stroke-width="1.3"/></svg><div class="a" style="left:421px;top:924px;width:126px;height:26px;border:1px solid #dcdfe6;border-radius:4px"></div><div class="a" style="left:448px;top:927px;font-size:14px;line-height:20px;color:#606266">20条/页</div><svg class="a" style="left:525px;top:933px" width="12" height="7" viewBox="0 0 12 7"><path d="M0.5 0.5h11L6 6.5z" fill="#c0c4cc"/></svg><div class="a" style="left:555px;top:927px;font-size:14px;line-height:20px;color:#606266">前往</div><div class="a" style="left:592px;top:924px;width:55px;height:26px;border:1px solid #dcdfe6;border-radius:4px"></div><div class="a" style="left:592px;top:927px;width:55px;text-align:center;font-size:14px;line-height:20px;color:#606266">1</div><div class="a" style="left:651px;top:927px;font-size:14px;line-height:20px;color:#606266">页</div><div class="a" style="left:2300px;top:927px;width:200px;text-align:right;font-size:14px;line-height:20px;color:#606266">共 6 条记录</div><div class="a" style="left:255px;top:966px;width:2281px;height:327px;background:#fff"></div><div class="a" style="left:2255px;top:1250px;width:281px;height:40px;overflow:hidden"><div class="a" style="left:102px;top:4px;font-size:26px;line-height:34px;font-weight:bold;color:rgba(255,255,255,0.92);text-shadow:0 1px 2px rgba(0,0,0,0.05);white-space:nowrap">InfoQ</div><div class="a" style="left:192px;top:9px;width:2px;height:22px;background:rgba(255,255,255,0.9);box-shadow:0 1px 2px rgba(0,0,0,0.06)"></div><div class="a" style="left:203px;top:6px;font-size:21px;line-height:30px;font-weight:bold;color:rgba(255,255,255,0.92);text-shadow:0 1px 2px rgba(0,0,0,0.05);white-space:nowrap">写作社区</div></div><div class="a" style="left:2487px;top:1220px;width:40px;height:40px;border-radius:50%;background:#1677ff;box-shadow:0 0 18px rgba(0,0,0,0.10)"></div><svg class="a" style="left:2498px;top:1231px" width="18" height="18" viewBox="0 0 18 18"><path d="M11.5 2.5l3 3-7 7H4.5v-3z" fill="none" stroke="#fff" stroke-width="1.4" stroke-linejoin="round"/><path d="M2.5 15.5h12" stroke="#fff" stroke-width="1.4"/></svg>
</body></html>
